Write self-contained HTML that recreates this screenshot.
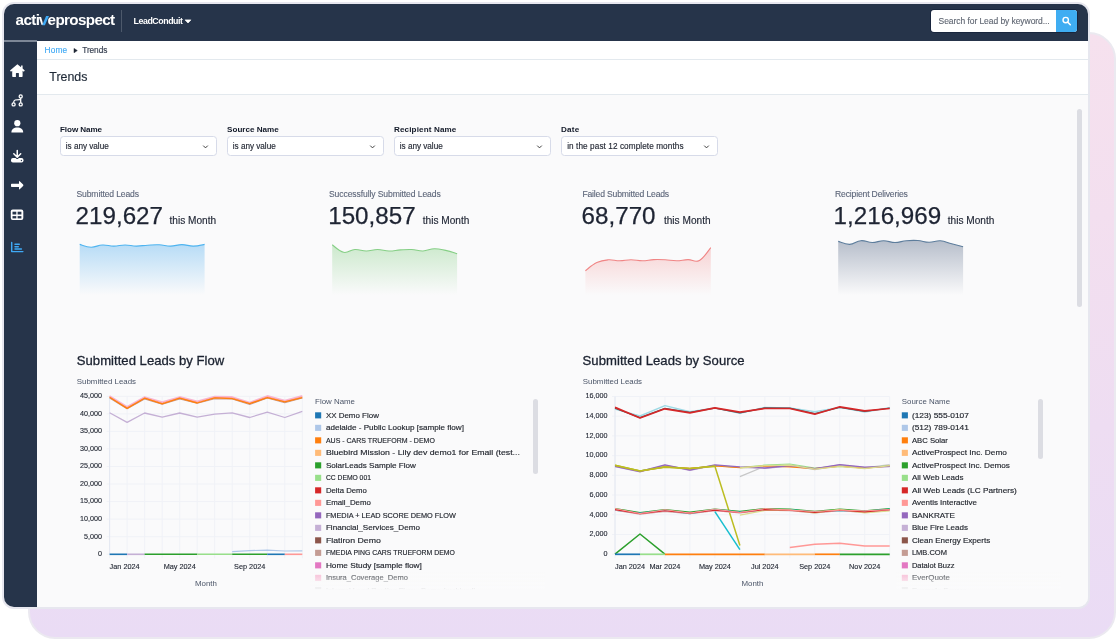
<!DOCTYPE html>
<html lang="en">
<head>
<meta charset="utf-8">
<title>Trends - LeadConduit</title>
<style>
*{box-sizing:border-box;margin:0;padding:0}
html,body{width:1116px;height:639px;overflow:hidden;background:#fff}
body{position:relative;font-family:"Liberation Sans",sans-serif;color:#1f2937}
.abs{position:absolute}
#blob{left:28px;top:32px;width:1088px;height:607px;border-radius:27px;border:2px solid #ebe9f0;
 background:linear-gradient(180deg,#f6e1ee 0%,#f3dfef 30%,#eeddf2 65%,#eadcf5 100%)}
#win{left:2px;top:2px;width:1088px;height:607px;border-radius:12px;border:2px solid #e7e7ef;background:#fafafb;overflow:hidden}
#inner{will-change:transform;position:absolute;left:-4px;top:-4px;width:1116px;height:639px}
#nav{left:0;top:0;width:1090px;height:41px;background:#26344a}
#navline{left:0;top:40px;width:37px;height:2px;background:#7d8797}
#side{left:0;top:42px;width:37px;height:570px;background:#26344a}
#crumb{left:37px;top:41px;width:1053px;height:19px;background:#fff;border-bottom:1px solid #e3e9ee}
#titlebar{left:37px;top:60px;width:1053px;height:35px;background:#fff;border-bottom:1px solid #e3e9ee}
#main{left:37px;top:95px;width:1053px;height:516px;background:#fafafb}
.t{position:absolute;white-space:pre;line-height:1}
#divider{left:121px;top:9.8px;width:1px;height:21.8px;background:#4d596b}
#caret{left:185px;top:19.5px;width:0;height:0;border-left:3.2px solid transparent;border-right:3.2px solid transparent;border-top:3.6px solid #fff}
#search{left:931px;top:10px;width:146px;height:22px;border-radius:3px;background:#fff;overflow:hidden;box-shadow:0 0 0 0.8px #16223a}
#sbtn{left:125px;top:0;width:21px;height:22px;background:#3fadf2}
.sel{position:absolute;top:136px;width:156.5px;height:20px;border:1px solid #d7dbe9;border-radius:3.5px;background:#fff}
.sel svg{position:absolute;right:6.5px;top:7px}
#crumbarrow{left:73.8px;top:48.3px;width:0;height:0;border-top:2.3px solid transparent;border-bottom:2.3px solid transparent;border-left:3.5px solid #222b3a}
#vscroll{left:1077px;top:109px;width:5.2px;height:198px;border-radius:3px;background:#dcdde3}
.lscroll{position:absolute;width:5px;border-radius:3px;background:#dcdde3}
.lg{filter:blur(0.45px)}
.fade{position:absolute;background:linear-gradient(to bottom,rgba(249,250,251,0),rgba(249,250,251,1) 75%)}
</style>
</head>
<body>
<div id="blob" class="abs"></div>
<div id="win" class="abs"><div id="inner">
 <div id="nav" class="abs"></div>
 <div id="navline" class="abs"></div>
 <div id="side" class="abs"></div>
 <div id="crumb" class="abs"></div>
 <div id="titlebar" class="abs"></div>
 <div id="main" class="abs"></div>
 <div id="divider" class="abs"></div>
 <svg class="abs" style="left:180px;top:15px" width="16" height="12" viewBox="180 15 16 12"><path d="M185.1 19.9 H190.9 L188 23 Z" fill="#fff" stroke="#fff" stroke-width="0.7" stroke-linejoin="round"/></svg>
 <div id="search" class="abs"><div id="sbtn" class="abs">
  <svg width="21.3" height="21.7" viewBox="0 0 21.3 21.7"><circle cx="9.7" cy="10.1" r="2.7" fill="none" stroke="#fff" stroke-width="1.4"/><path d="M11.8 12.2 L14.3 14.7" stroke="#fff" stroke-width="1.6" stroke-linecap="round"/></svg>
 </div></div>
 <svg class="abs" style="left:70px;top:44px" width="12" height="12" viewBox="70 44 12 12"><path d="M74 48.4 L77.3 50.6 L74 52.8 Z" fill="#1d2533" stroke="#1d2533" stroke-width="0.5" stroke-linejoin="round"/></svg>
 <div class="sel" style="left:60px"><svg width="7" height="6" viewBox="0 0 7 6"><path d="M1.5 1.9 L3.5 3.9 L5.5 1.9" fill="none" stroke="#333" stroke-width="0.95" stroke-linecap="round" stroke-linejoin="round"/></svg></div>
 <div class="sel" style="left:227px"><svg width="7" height="6" viewBox="0 0 7 6"><path d="M1.5 1.9 L3.5 3.9 L5.5 1.9" fill="none" stroke="#333" stroke-width="0.95" stroke-linecap="round" stroke-linejoin="round"/></svg></div>
 <div class="sel" style="left:394px"><svg width="7" height="6" viewBox="0 0 7 6"><path d="M1.5 1.9 L3.5 3.9 L5.5 1.9" fill="none" stroke="#333" stroke-width="0.95" stroke-linecap="round" stroke-linejoin="round"/></svg></div>
 <div class="sel" style="left:561px"><svg width="7" height="6" viewBox="0 0 7 6"><path d="M1.5 1.9 L3.5 3.9 L5.5 1.9" fill="none" stroke="#333" stroke-width="0.95" stroke-linecap="round" stroke-linejoin="round"/></svg></div>
<svg class="abs" style="left:0;top:0" width="40" height="639" viewBox="0 0 40 639">
 <!-- home -->
 <path d="M17.4 64.2 L10.0 70.4 L11.0 71.7 L12.2 70.7 V76.3 Q12.2 77 12.9 77 H15.9 V73.4 Q15.9 72.9 16.4 72.9 H18.4 Q18.9 72.9 18.9 73.4 V77 H21.9 Q22.6 77 22.6 76.3 V70.7 L23.8 71.7 L24.8 70.4 L22.6 68.6 V65.6 H21.1 V67.3 Z" fill="#fff"/>
 <!-- flow -->
 <g fill="none" stroke="#fff" stroke-width="1.3">
  <circle cx="20.7" cy="96.4" r="1.55"/><circle cx="20.7" cy="104.4" r="1.55"/><circle cx="13.6" cy="104.4" r="1.55"/>
  <path d="M20.7 98 V102.8"/><path d="M13.6 102.8 C13.6 99.4 16 99.6 20.7 99.6"/>
 </g>
 <!-- user -->
 <g fill="#fff">
  <circle cx="17.3" cy="123.2" r="3.1"/>
  <path d="M11.4 132.5 C11.4 129.2 13.9 127.5 17.3 127.5 C20.7 127.5 23.2 129.2 23.2 132.5 Z"/>
 </g>
 <!-- download -->
 <rect x="11" y="158" width="12.5" height="4.5" rx="1.9" fill="#fff"/>
 <path d="M17.25 150.4 V157 M13.8 153.8 L17.25 157.3 L20.7 153.8" fill="none" stroke="#26344a" stroke-width="3.2" stroke-linecap="round" stroke-linejoin="round"/>
 <path d="M17.25 150.4 V157 M13.8 153.8 L17.25 157.3 L20.7 153.8" fill="none" stroke="#fff" stroke-width="1.5" stroke-linecap="round" stroke-linejoin="round"/>
 <circle cx="21.4" cy="160.5" r="0.65" fill="#26344a"/>
 <!-- arrow right -->
 <path d="M11.7 183.8 H19 V181.6 Q19 180.8 19.7 181.3 L23.1 184.6 Q23.7 185.3 23.1 186 L19.7 189.2 Q19 189.7 19 188.9 V186.9 H11.7 Q11 186.9 11 186.2 V184.5 Q11 183.8 11.7 183.8 Z" fill="#fff"/>
 <!-- table -->
 <rect x="10.8" y="209.5" width="12.5" height="10.4" rx="1.9" fill="#fff"/>
 <g fill="#26344a">
  <rect x="12.5" y="211.7" width="3.8" height="2.8"/><rect x="17.6" y="211.7" width="3.8" height="2.8"/>
  <rect x="12.5" y="216.1" width="3.8" height="2.3"/><rect x="17.6" y="216.1" width="3.8" height="2.3"/>
 </g>
 <!-- chart bar (active) -->
 <g fill="none" stroke="#3fa9f5" stroke-width="1.45" stroke-linecap="round" stroke-linejoin="round">
  <path d="M11.7 242.4 V251.6 H22.9"/>
  <path d="M15 244.2 H19.3"/><path d="M15 246.7 H18.3"/><path d="M15 249.0 H21.4"/>
 </g>
</svg>

<svg class="abs" style="left:0;top:0" width="1116" height="639" viewBox="0 0 1116 639" font-family="'Liberation Sans', sans-serif">
<defs>
<linearGradient id="g1" x1="0" y1="0" x2="0" y2="1"><stop offset="0" stop-color="#8fcaf3" stop-opacity="0.62"/><stop offset="1" stop-color="#8fcaf3" stop-opacity="0"/></linearGradient>
<linearGradient id="g2" x1="0" y1="0" x2="0" y2="1"><stop offset="0" stop-color="#a6dba6" stop-opacity="0.55"/><stop offset="1" stop-color="#a6dba6" stop-opacity="0"/></linearGradient>
<linearGradient id="g3" x1="0" y1="0" x2="0" y2="1"><stop offset="0" stop-color="#f5a3a3" stop-opacity="0.45"/><stop offset="1" stop-color="#f5a3a3" stop-opacity="0"/></linearGradient>
<linearGradient id="g4" x1="0" y1="0" x2="0" y2="1"><stop offset="0" stop-color="#8d99ad" stop-opacity="0.62"/><stop offset="1" stop-color="#8d99ad" stop-opacity="0"/></linearGradient>
<clipPath id="lc1"><rect x="310" y="392" width="232" height="197.5"/></clipPath>
<clipPath id="lc2"><rect x="896" y="392" width="160" height="197.5"/></clipPath>
<linearGradient id="fd" x1="0" y1="0" x2="0" y2="1"><stop offset="0" stop-color="#fafafb" stop-opacity="0"/><stop offset="1" stop-color="#fafafb" stop-opacity="1"/></linearGradient>
</defs>
<path d="M79.7 244.4 C82.1 245.0 86.3 247.1 91.1 247.2 C95.8 247.3 97.6 245.2 102.4 245.0 C107.2 244.7 109.0 246.1 113.8 246.1 C118.5 246.1 120.3 245.0 125.1 245.0 C129.9 245.0 131.7 246.1 136.5 246.1 C141.2 246.1 143.1 245.4 147.8 245.2 C152.6 244.9 154.4 244.6 159.2 244.8 C164.0 245.0 165.8 246.1 170.5 246.1 C175.3 246.1 177.1 244.6 181.9 244.6 C186.7 244.6 188.5 246.1 193.2 246.1 C198.0 246.1 202.2 244.8 204.6 244.4 L204.6 295 L79.7 295 Z" fill="url(#g1)"/>
<path d="M79.7 244.4 C82.1 245.0 86.3 247.1 91.1 247.2 C95.8 247.3 97.6 245.2 102.4 245.0 C107.2 244.7 109.0 246.1 113.8 246.1 C118.5 246.1 120.3 245.0 125.1 245.0 C129.9 245.0 131.7 246.1 136.5 246.1 C141.2 246.1 143.1 245.4 147.8 245.2 C152.6 244.9 154.4 244.6 159.2 244.8 C164.0 245.0 165.8 246.1 170.5 246.1 C175.3 246.1 177.1 244.6 181.9 244.6 C186.7 244.6 188.5 246.1 193.2 246.1 C198.0 246.1 202.2 244.8 204.6 244.4" fill="none" stroke="#4eb4f0" stroke-width="1.1"/>
<path d="M332.2 244.8 C334.6 246.4 338.8 251.3 343.6 252.3 C348.3 253.3 350.1 249.8 354.9 249.5 C359.7 249.2 361.5 251.0 366.3 251.0 C371.0 251.0 372.8 249.5 377.6 249.5 C382.4 249.5 384.2 250.9 389.0 251.0 C393.7 251.1 395.6 250.2 400.3 249.9 C405.1 249.6 406.9 249.3 411.7 249.5 C416.5 249.7 418.3 251.2 423.0 251.0 C427.8 250.8 429.6 248.8 434.4 248.7 C439.2 248.6 441.0 249.4 445.7 250.4 C450.5 251.4 454.7 252.9 457.1 253.6 L457.1 295 L332.2 295 Z" fill="url(#g2)"/>
<path d="M332.2 244.8 C334.6 246.4 338.8 251.3 343.6 252.3 C348.3 253.3 350.1 249.8 354.9 249.5 C359.7 249.2 361.5 251.0 366.3 251.0 C371.0 251.0 372.8 249.5 377.6 249.5 C382.4 249.5 384.2 250.9 389.0 251.0 C393.7 251.1 395.6 250.2 400.3 249.9 C405.1 249.6 406.9 249.3 411.7 249.5 C416.5 249.7 418.3 251.2 423.0 251.0 C427.8 250.8 429.6 248.8 434.4 248.7 C439.2 248.6 441.0 249.4 445.7 250.4 C450.5 251.4 454.7 252.9 457.1 253.6" fill="none" stroke="#86cf86" stroke-width="1.1"/>
<path d="M585.4 270.7 C587.8 269.0 592.0 264.9 596.8 262.6 C601.6 260.3 603.4 260.2 608.2 259.8 C613.0 259.4 614.8 260.8 619.6 260.8 C624.4 260.8 626.2 259.8 631.0 259.8 C635.8 259.8 637.6 260.8 642.4 260.8 C647.2 260.8 649.0 259.8 653.8 259.6 C658.6 259.4 660.4 259.5 665.2 259.8 C670.0 260.1 671.8 260.8 676.6 260.8 C681.4 260.8 683.2 259.7 688.0 259.6 C692.8 259.5 694.6 262.9 699.4 260.4 C704.2 257.9 708.4 250.3 710.8 247.6 L710.8 295 L585.4 295 Z" fill="url(#g3)"/>
<path d="M585.4 270.7 C587.8 269.0 592.0 264.9 596.8 262.6 C601.6 260.3 603.4 260.2 608.2 259.8 C613.0 259.4 614.8 260.8 619.6 260.8 C624.4 260.8 626.2 259.8 631.0 259.8 C635.8 259.8 637.6 260.8 642.4 260.8 C647.2 260.8 649.0 259.8 653.8 259.6 C658.6 259.4 660.4 259.5 665.2 259.8 C670.0 260.1 671.8 260.8 676.6 260.8 C681.4 260.8 683.2 259.7 688.0 259.6 C692.8 259.5 694.6 262.9 699.4 260.4 C704.2 257.9 708.4 250.3 710.8 247.6" fill="none" stroke="#f08585" stroke-width="1.1"/>
<path d="M838.2 241.4 C840.6 242.0 844.8 244.5 849.6 244.4 C854.3 244.3 856.1 241.1 860.9 240.7 C865.7 240.3 867.5 242.5 872.3 242.5 C877.0 242.5 878.8 240.7 883.6 240.7 C888.4 240.7 890.2 242.5 895.0 242.5 C899.7 242.5 901.6 241.1 906.3 240.7 C911.1 240.3 912.9 240.2 917.7 240.5 C922.5 240.8 924.3 242.2 929.0 242.3 C933.8 242.4 935.6 240.5 940.4 240.8 C945.2 241.1 947.0 242.6 951.7 243.8 C956.5 245.0 960.7 246.1 963.1 246.7 L963.1 295 L838.2 295 Z" fill="url(#g4)"/>
<path d="M838.2 241.4 C840.6 242.0 844.8 244.5 849.6 244.4 C854.3 244.3 856.1 241.1 860.9 240.7 C865.7 240.3 867.5 242.5 872.3 242.5 C877.0 242.5 878.8 240.7 883.6 240.7 C888.4 240.7 890.2 242.5 895.0 242.5 C899.7 242.5 901.6 241.1 906.3 240.7 C911.1 240.3 912.9 240.2 917.7 240.5 C922.5 240.8 924.3 242.2 929.0 242.3 C933.8 242.4 935.6 240.5 940.4 240.8 C945.2 241.1 947.0 242.6 951.7 243.8 C956.5 245.0 960.7 246.1 963.1 246.7" fill="none" stroke="#5d7d9c" stroke-width="1.1"/>
<path d="M109.60 396.3 V558.2" stroke="#f0f2f7" stroke-width="1"/>
<path d="M127.12 396.3 V558.2" stroke="#f0f2f7" stroke-width="1"/>
<path d="M144.64 396.3 V558.2" stroke="#f0f2f7" stroke-width="1"/>
<path d="M162.15 396.3 V558.2" stroke="#f0f2f7" stroke-width="1"/>
<path d="M179.67 396.3 V558.2" stroke="#f0f2f7" stroke-width="1"/>
<path d="M197.19 396.3 V558.2" stroke="#f0f2f7" stroke-width="1"/>
<path d="M214.71 396.3 V558.2" stroke="#f0f2f7" stroke-width="1"/>
<path d="M232.23 396.3 V558.2" stroke="#f0f2f7" stroke-width="1"/>
<path d="M249.75 396.3 V558.2" stroke="#f0f2f7" stroke-width="1"/>
<path d="M267.26 396.3 V558.2" stroke="#f0f2f7" stroke-width="1"/>
<path d="M284.78 396.3 V558.2" stroke="#f0f2f7" stroke-width="1"/>
<path d="M302.30 396.3 V558.2" stroke="#f0f2f7" stroke-width="1"/>
<path d="M106.6 396.30 H302.3" stroke="#f0f2f7" stroke-width="1"/>
<path d="M106.6 413.84 H302.3" stroke="#f0f2f7" stroke-width="1"/>
<path d="M106.6 431.39 H302.3" stroke="#f0f2f7" stroke-width="1"/>
<path d="M106.6 448.93 H302.3" stroke="#f0f2f7" stroke-width="1"/>
<path d="M106.6 466.48 H302.3" stroke="#f0f2f7" stroke-width="1"/>
<path d="M106.6 484.02 H302.3" stroke="#f0f2f7" stroke-width="1"/>
<path d="M106.6 501.57 H302.3" stroke="#f0f2f7" stroke-width="1"/>
<path d="M106.6 519.11 H302.3" stroke="#f0f2f7" stroke-width="1"/>
<path d="M106.6 536.66 H302.3" stroke="#f0f2f7" stroke-width="1"/>
<path d="M106.6 554.20 H302.3" stroke="#f0f2f7" stroke-width="1"/>
<path d="M109.60 396.3 V554.2" stroke="#e4e8f1" stroke-width="1"/>
<text x="102.1" y="398.1" font-size="7.2" fill="#1f2430" stroke="#1f2430" stroke-width="0.12" text-anchor="end">45,000</text>
<text x="102.1" y="415.6" font-size="7.2" fill="#1f2430" stroke="#1f2430" stroke-width="0.12" text-anchor="end">40,000</text>
<text x="102.1" y="433.2" font-size="7.2" fill="#1f2430" stroke="#1f2430" stroke-width="0.12" text-anchor="end">35,000</text>
<text x="102.1" y="450.7" font-size="7.2" fill="#1f2430" stroke="#1f2430" stroke-width="0.12" text-anchor="end">30,000</text>
<text x="102.1" y="468.3" font-size="7.2" fill="#1f2430" stroke="#1f2430" stroke-width="0.12" text-anchor="end">25,000</text>
<text x="102.1" y="485.8" font-size="7.2" fill="#1f2430" stroke="#1f2430" stroke-width="0.12" text-anchor="end">20,000</text>
<text x="102.1" y="503.4" font-size="7.2" fill="#1f2430" stroke="#1f2430" stroke-width="0.12" text-anchor="end">15,000</text>
<text x="102.1" y="520.9" font-size="7.2" fill="#1f2430" stroke="#1f2430" stroke-width="0.12" text-anchor="end">10,000</text>
<text x="102.1" y="538.5" font-size="7.2" fill="#1f2430" stroke="#1f2430" stroke-width="0.12" text-anchor="end">5,000</text>
<text x="102.1" y="556.0" font-size="7.2" fill="#1f2430" stroke="#1f2430" stroke-width="0.12" text-anchor="end">0</text>
<text x="109.6" y="568.8" font-size="7.3" fill="#1f2430" stroke="#1f2430" stroke-width="0.12">Jan 2024</text>
<text x="179.7" y="568.8" font-size="7.3" fill="#1f2430" stroke="#1f2430" stroke-width="0.12" text-anchor="middle">May 2024</text>
<text x="249.7" y="568.8" font-size="7.3" fill="#1f2430" stroke="#1f2430" stroke-width="0.12" text-anchor="middle">Sep 2024</text>
<text x="76.8" y="383.9" font-size="7.9" fill="#4b5568">Submitted Leads</text>
<text x="205.9" y="586.3" font-size="7.9" fill="#4b5568" text-anchor="middle">Month</text>
<path d="M109.6 398.0 L127.1 408.7 L144.6 399.0 L162.2 404.1 L179.7 399.0 L197.2 403.3 L214.7 398.7 L232.2 399.0 L249.7 404.5 L267.3 398.0 L284.8 402.7 L302.3 398.0" fill="none" stroke="#c49c94" stroke-width="1.1" stroke-linejoin="round"/>
<path d="M109.6 395.8 L127.1 406.5 L144.6 396.8 L162.2 401.9 L179.7 396.8 L197.2 401.1 L214.7 396.5 L232.2 396.8 L249.7 402.3 L267.3 395.8 L284.8 400.5 L302.3 395.8" fill="none" stroke="#f7b6d2" stroke-width="1.4" stroke-linejoin="round"/>
<path d="M109.6 396.8 L127.1 407.5 L144.6 397.8 L162.2 402.9 L179.7 397.8 L197.2 402.1 L214.7 397.5 L232.2 397.8 L249.7 403.3 L267.3 396.8 L284.8 401.5 L302.3 396.8" fill="none" stroke="#ff9896" stroke-width="1.0" stroke-linejoin="round"/>
<path d="M109.6 397.2 L127.1 408.4 L144.6 398.2 L162.2 403.8 L179.7 398.2 L197.2 403.0 L214.7 397.9 L232.2 398.7 L249.7 403.7 L267.3 397.7 L284.8 401.9 L302.3 397.7" fill="none" stroke="#ff7f0e" stroke-width="1.3" stroke-linejoin="round"/>
<path d="M109.6 412.8 L127.1 422.4 L144.6 413.0 L162.2 417.2 L179.7 413.0 L197.2 417.2 L214.7 414.2 L232.2 412.8 L249.7 417.5 L267.3 412.1 L284.8 417.5 L302.3 411.4" fill="none" stroke="#c5b0d5" stroke-width="1.3" stroke-linejoin="round"/>
<path d="M232.2 551.7 L249.7 550.6 L267.3 550.2 L284.8 551.0 L302.3 550.9" fill="none" stroke="#aec7e8" stroke-width="1.2" stroke-linejoin="round"/>
<path d="M109.6 554.3 H127.1" stroke="#1f77b4" stroke-width="1.6"/>
<path d="M127.1 554.3 H144.6" stroke="#c5b0d5" stroke-width="1.6"/>
<path d="M144.6 554.3 H197.2" stroke="#2ca02c" stroke-width="1.6"/>
<path d="M197.2 554.3 H232.2" stroke="#98df8a" stroke-width="1.6"/>
<path d="M232.2 554.3 H267.3" stroke="#2ca02c" stroke-width="1.6"/>
<path d="M267.3 554.3 H284.8" stroke="#1f77b4" stroke-width="1.6"/>
<path d="M284.8 554.3 H302.3" stroke="#ff9896" stroke-width="1.6"/>
<path d="M615.00 396.5 V558.2" stroke="#f0f2f7" stroke-width="1"/>
<path d="M639.97 396.5 V558.2" stroke="#f0f2f7" stroke-width="1"/>
<path d="M664.95 396.5 V558.2" stroke="#f0f2f7" stroke-width="1"/>
<path d="M689.92 396.5 V558.2" stroke="#f0f2f7" stroke-width="1"/>
<path d="M714.89 396.5 V558.2" stroke="#f0f2f7" stroke-width="1"/>
<path d="M739.86 396.5 V558.2" stroke="#f0f2f7" stroke-width="1"/>
<path d="M764.84 396.5 V558.2" stroke="#f0f2f7" stroke-width="1"/>
<path d="M789.81 396.5 V558.2" stroke="#f0f2f7" stroke-width="1"/>
<path d="M814.78 396.5 V558.2" stroke="#f0f2f7" stroke-width="1"/>
<path d="M839.75 396.5 V558.2" stroke="#f0f2f7" stroke-width="1"/>
<path d="M864.73 396.5 V558.2" stroke="#f0f2f7" stroke-width="1"/>
<path d="M889.70 396.5 V558.2" stroke="#f0f2f7" stroke-width="1"/>
<path d="M612.0 396.50 H889.7" stroke="#f0f2f7" stroke-width="1"/>
<path d="M612.0 416.21 H889.7" stroke="#f0f2f7" stroke-width="1"/>
<path d="M612.0 435.93 H889.7" stroke="#f0f2f7" stroke-width="1"/>
<path d="M612.0 455.64 H889.7" stroke="#f0f2f7" stroke-width="1"/>
<path d="M612.0 475.35 H889.7" stroke="#f0f2f7" stroke-width="1"/>
<path d="M612.0 495.06 H889.7" stroke="#f0f2f7" stroke-width="1"/>
<path d="M612.0 514.78 H889.7" stroke="#f0f2f7" stroke-width="1"/>
<path d="M612.0 534.49 H889.7" stroke="#f0f2f7" stroke-width="1"/>
<path d="M612.0 554.20 H889.7" stroke="#f0f2f7" stroke-width="1"/>
<path d="M615.00 396.5 V554.2" stroke="#e4e8f1" stroke-width="1"/>
<text x="607.5" y="398.3" font-size="7.2" fill="#1f2430" stroke="#1f2430" stroke-width="0.12" text-anchor="end">16,000</text>
<text x="607.5" y="418.0" font-size="7.2" fill="#1f2430" stroke="#1f2430" stroke-width="0.12" text-anchor="end">14,000</text>
<text x="607.5" y="437.7" font-size="7.2" fill="#1f2430" stroke="#1f2430" stroke-width="0.12" text-anchor="end">12,000</text>
<text x="607.5" y="457.4" font-size="7.2" fill="#1f2430" stroke="#1f2430" stroke-width="0.12" text-anchor="end">10,000</text>
<text x="607.5" y="477.2" font-size="7.2" fill="#1f2430" stroke="#1f2430" stroke-width="0.12" text-anchor="end">8,000</text>
<text x="607.5" y="496.9" font-size="7.2" fill="#1f2430" stroke="#1f2430" stroke-width="0.12" text-anchor="end">6,000</text>
<text x="607.5" y="516.6" font-size="7.2" fill="#1f2430" stroke="#1f2430" stroke-width="0.12" text-anchor="end">4,000</text>
<text x="607.5" y="536.3" font-size="7.2" fill="#1f2430" stroke="#1f2430" stroke-width="0.12" text-anchor="end">2,000</text>
<text x="607.5" y="556.0" font-size="7.2" fill="#1f2430" stroke="#1f2430" stroke-width="0.12" text-anchor="end">0</text>
<text x="615.0" y="568.8" font-size="7.3" fill="#1f2430" stroke="#1f2430" stroke-width="0.12">Jan 2024</text>
<text x="664.9" y="568.8" font-size="7.3" fill="#1f2430" stroke="#1f2430" stroke-width="0.12" text-anchor="middle">Mar 2024</text>
<text x="714.9" y="568.8" font-size="7.3" fill="#1f2430" stroke="#1f2430" stroke-width="0.12" text-anchor="middle">May 2024</text>
<text x="764.8" y="568.8" font-size="7.3" fill="#1f2430" stroke="#1f2430" stroke-width="0.12" text-anchor="middle">Jul 2024</text>
<text x="814.8" y="568.8" font-size="7.3" fill="#1f2430" stroke="#1f2430" stroke-width="0.12" text-anchor="middle">Sep 2024</text>
<text x="864.7" y="568.8" font-size="7.3" fill="#1f2430" stroke="#1f2430" stroke-width="0.12" text-anchor="middle">Nov 2024</text>
<text x="582.8" y="383.9" font-size="7.9" fill="#4b5568">Submitted Leads</text>
<text x="752.4" y="586.3" font-size="7.9" fill="#4b5568" text-anchor="middle">Month</text>
<path d="M615.0 466.7 L640.0 471.9 L664.9 465.3 L689.9 470.4 L714.9 465.3 L739.9 467.3 L764.8 468.4 L789.8 466.1 L814.8 469.0 L839.8 465.0 L864.7 467.6 L889.7 466.7" fill="none" stroke="#c5b0d5" stroke-width="1.3" stroke-linejoin="round"/>
<path d="M739.9 476.6 L764.8 466.3 L789.8 465.2 L814.8 469.7 L839.8 465.7 L864.7 468.0 L889.7 464.6" fill="none" stroke="#c7c7c7" stroke-width="1.3" stroke-linejoin="round"/>
<path d="M615.0 465.7 L640.0 470.9 L664.9 466.3 L689.9 468.6 L714.9 465.7 L739.9 467.5 L764.8 465.2 L789.8 464.0 L814.8 468.0 L839.8 466.3 L864.7 468.0 L889.7 465.7" fill="none" stroke="#98df8a" stroke-width="1.2" stroke-linejoin="round"/>
<path d="M615.0 465.7 L640.0 471.2 L664.9 466.9 L689.9 468.3 L714.9 466.0 L739.9 467.7 L764.8 466.0 L789.8 466.9 L814.8 468.6 L839.8 466.3 L864.7 468.3 L889.7 466.0" fill="none" stroke="#ff7f0e" stroke-width="1.1" stroke-linejoin="round"/>
<path d="M615.0 466.3 L640.0 471.5 L664.9 464.9 L689.9 470.0 L714.9 464.9 L739.9 466.9 L764.8 468.0 L789.8 465.7 L814.8 468.6 L839.8 464.6 L864.7 467.2 L889.7 466.3" fill="none" stroke="#9467bd" stroke-width="1.3" stroke-linejoin="round"/>
<path d="M615.0 465.2 L640.0 470.9 L664.9 466.9 L689.9 468.6 L714.9 466.3 L739.9 545.4" fill="none" stroke="#bcbd22" stroke-width="1.5" stroke-linejoin="round"/>
<path d="M739.9 468.0 L764.8 465.7 L789.8 465.2 L814.8 469.2 L839.8 466.3 L864.7 468.6 L889.7 465.7" fill="none" stroke="#dbdb8d" stroke-width="1.3" stroke-linejoin="round"/>
<path d="M615.0 465.2 L640.0 470.9 L664.9 467.2 L689.9 468.6 L714.9 466.3" fill="none" stroke="#bcbd22" stroke-width="1.4" stroke-linejoin="round"/>
<path d="M615.0 510.1 L640.0 514.1 L664.9 511.3 L689.9 513.6 L714.9 510.7 L739.9 513.0 L764.8 510.1 L789.8 510.7 L814.8 513.0 L839.8 510.7 L864.7 512.4 L889.7 510.1" fill="none" stroke="#c49c94" stroke-width="1.2" stroke-linejoin="round"/>
<path d="M615.0 508.5 L640.0 512.5 L664.9 509.7 L689.9 512.0 L714.9 509.1 L739.9 511.4 L764.8 508.5 L789.8 509.1 L814.8 511.4 L839.8 509.1 L864.7 510.8 L889.7 508.5" fill="none" stroke="#2ca02c" stroke-width="1.2" stroke-linejoin="round"/>
<path d="M615.0 510.1 L640.0 513.1 L664.9 510.3 L689.9 513.6 L714.9 509.7 L739.9 512.0 L764.8 510.1 L789.8 509.7 L814.8 512.0 L839.8 510.7 L864.7 511.4 L889.7 509.1" fill="none" stroke="#17becf" stroke-width="1.2" stroke-linejoin="round"/>
<path d="M615.0 509.8 L640.0 513.8 L664.9 511.0 L689.9 513.3 L714.9 510.4 L739.9 512.7 L764.8 509.8 L789.8 510.4 L814.8 512.7 L839.8 510.4 L864.7 512.1 L889.7 509.8" fill="none" stroke="#f7b6d2" stroke-width="1.2" stroke-linejoin="round"/>
<path d="M714.9 511.6 L739.9 549.7" fill="none" stroke="#17becf" stroke-width="1.5" stroke-linejoin="round"/>
<path d="M739.9 515.1 L764.8 510.5 L789.8 509.9 L814.8 512.8 L839.8 509.3 L864.7 512.8 L889.7 511.0" fill="none" stroke="#dbdb8d" stroke-width="1.2" stroke-linejoin="round"/>
<path d="M615.0 509.6 L640.0 513.6 L664.9 510.8 L689.9 513.1 L714.9 510.2 L739.9 512.5 L764.8 509.6 L789.8 510.2 L814.8 512.5 L839.8 510.2 L864.7 511.9 L889.7 509.6" fill="none" stroke="#d62728" stroke-width="1.1" stroke-linejoin="round"/>
<path d="M615.0 508.5 L640.0 513.6 L664.9 509.7 L689.9 513.1 L714.9 509.1 L739.9 512.5 L764.8 508.5 L789.8 510.2 L814.8 511.4 L839.8 510.2 L864.7 510.8 L889.7 509.6" fill="none" stroke="#ff9896" stroke-width="1.0" stroke-linejoin="round"/>
<path d="M615.0 409.1 L640.0 416.0 L664.9 405.6 L689.9 411.7 L714.9 407.9 L739.9 413.4 L764.8 407.4 L789.8 407.9 L814.8 411.7 L839.8 407.4 L864.7 412.0 L889.7 407.7" fill="none" stroke="#9edae5" stroke-width="1.4" stroke-linejoin="round"/>
<path d="M615.0 408.3 L640.0 417.6 L664.9 408.4 L689.9 412.4 L714.9 408.2 L739.9 412.9 L764.8 407.9 L789.8 408.2 L814.8 413.6 L839.8 407.3 L864.7 411.5 L889.7 408.0" fill="none" stroke="#4d5a5e" stroke-width="1.2" stroke-linejoin="round"/>
<path d="M615.0 407.4 L640.0 418.0 L664.9 408.8 L689.9 412.8 L714.9 407.9 L739.9 412.2 L764.8 408.5 L789.8 408.5 L814.8 414.2 L839.8 406.8 L864.7 410.8 L889.7 408.5" fill="none" stroke="#d62728" stroke-width="1.7" stroke-linejoin="round"/>
<path d="M615.0 554.1 L640.0 534.0 L664.9 554.1" fill="none" stroke="#2ca02c" stroke-width="1.5" stroke-linejoin="round"/>
<path d="M789.8 547.5 L814.8 544.3 L839.8 543.2 L864.7 546.0 L889.7 546.0" fill="none" stroke="#ff9896" stroke-width="1.4" stroke-linejoin="round"/>
<path d="M615.0 554.3 H640.0" stroke="#1f77b4" stroke-width="1.7"/>
<path d="M640.0 554.3 H664.9" stroke="#98df8a" stroke-width="1.7"/>
<path d="M664.9 554.3 H764.8" stroke="#ff7f0e" stroke-width="1.7"/>
<path d="M764.8 554.3 H814.8" stroke="#ffbb78" stroke-width="1.7"/>
<path d="M814.8 554.3 H839.8" stroke="#ff7f0e" stroke-width="1.7"/>
<path d="M839.8 554.3 H889.7" stroke="#2ca02c" stroke-width="1.7"/>
<text x="315.1" y="404" font-size="7.9" fill="#4b5568">Flow Name</text>
<g clip-path="url(#lc1)">
<rect x="315.1" y="412.3" width="6.1" height="6.1" fill="#1f77b4"/>
<text class="lg" x="325.9" y="417.9" font-size="7.3" fill="#23272f" stroke="#23272f" stroke-width="0.15" textLength="53" lengthAdjust="spacingAndGlyphs">XX Demo Flow</text>
<rect x="315.1" y="424.8" width="6.1" height="6.1" fill="#aec7e8"/>
<text class="lg" x="325.9" y="430.4" font-size="7.3" fill="#23272f" stroke="#23272f" stroke-width="0.15" textLength="138" lengthAdjust="spacingAndGlyphs">adelaide - Public Lookup [sample flow]</text>
<rect x="315.1" y="437.3" width="6.1" height="6.1" fill="#ff7f0e"/>
<text class="lg" x="325.9" y="442.9" font-size="7.3" fill="#23272f" stroke="#23272f" stroke-width="0.15" textLength="109" lengthAdjust="spacingAndGlyphs">AUS - CARS TRUEFORM - DEMO</text>
<rect x="315.1" y="449.8" width="6.1" height="6.1" fill="#ffbb78"/>
<text class="lg" x="325.9" y="455.4" font-size="7.3" fill="#23272f" stroke="#23272f" stroke-width="0.15" textLength="194" lengthAdjust="spacingAndGlyphs">Bluebird Mission - Lily dev demo1 for Email (test...</text>
<rect x="315.1" y="462.3" width="6.1" height="6.1" fill="#2ca02c"/>
<text class="lg" x="325.9" y="467.9" font-size="7.3" fill="#23272f" stroke="#23272f" stroke-width="0.15" textLength="90" lengthAdjust="spacingAndGlyphs">SolarLeads Sample Flow</text>
<rect x="315.1" y="474.8" width="6.1" height="6.1" fill="#98df8a"/>
<text class="lg" x="325.9" y="480.4" font-size="7.3" fill="#23272f" stroke="#23272f" stroke-width="0.15" textLength="45" lengthAdjust="spacingAndGlyphs">CC DEMO 001</text>
<rect x="315.1" y="487.3" width="6.1" height="6.1" fill="#d62728"/>
<text class="lg" x="325.9" y="492.9" font-size="7.3" fill="#23272f" stroke="#23272f" stroke-width="0.15" textLength="41" lengthAdjust="spacingAndGlyphs">Delta Demo</text>
<rect x="315.1" y="499.8" width="6.1" height="6.1" fill="#ff9896"/>
<text class="lg" x="325.9" y="505.4" font-size="7.3" fill="#23272f" stroke="#23272f" stroke-width="0.15" textLength="45" lengthAdjust="spacingAndGlyphs">Email_Demo</text>
<rect x="315.1" y="512.3" width="6.1" height="6.1" fill="#9467bd"/>
<text class="lg" x="325.9" y="517.9" font-size="7.3" fill="#23272f" stroke="#23272f" stroke-width="0.15" textLength="130" lengthAdjust="spacingAndGlyphs">FMEDIA + LEAD SCORE DEMO FLOW</text>
<rect x="315.1" y="524.8" width="6.1" height="6.1" fill="#c5b0d5"/>
<text class="lg" x="325.9" y="530.4" font-size="7.3" fill="#23272f" stroke="#23272f" stroke-width="0.15" textLength="94" lengthAdjust="spacingAndGlyphs">Financial_Services_Demo</text>
<rect x="315.1" y="537.3" width="6.1" height="6.1" fill="#8c564b"/>
<text class="lg" x="325.9" y="542.9" font-size="7.3" fill="#23272f" stroke="#23272f" stroke-width="0.15" textLength="55" lengthAdjust="spacingAndGlyphs">Flatiron Demo</text>
<rect x="315.1" y="549.8" width="6.1" height="6.1" fill="#c49c94"/>
<text class="lg" x="325.9" y="555.4" font-size="7.3" fill="#23272f" stroke="#23272f" stroke-width="0.15" textLength="129" lengthAdjust="spacingAndGlyphs">FMEDIA PING CARS TRUEFORM DEMO</text>
<rect x="315.1" y="562.3" width="6.1" height="6.1" fill="#e377c2"/>
<text class="lg" x="325.9" y="567.9" font-size="7.3" fill="#23272f" stroke="#23272f" stroke-width="0.15" textLength="96" lengthAdjust="spacingAndGlyphs">Home Study [sample flow]</text>
<rect x="315.1" y="574.8" width="6.1" height="6.1" fill="#f7b6d2"/>
<text class="lg" x="325.9" y="580.4" font-size="7.3" fill="#23272f" stroke="#23272f" stroke-width="0.15" textLength="82" lengthAdjust="spacingAndGlyphs">Insura_Coverage_Demo</text>
<rect x="315.1" y="587.3" width="6.1" height="6.1" fill="#7f7f7f"/>
<text class="lg" x="325.9" y="592.9" font-size="7.3" fill="#23272f" stroke="#23272f" stroke-width="0.15" textLength="150" lengthAdjust="spacingAndGlyphs">Internal Lead Routing Flow - Demo (archived)</text>
<rect x="315.1" y="599.8" width="6.1" height="6.1" fill="#c7c7c7"/>
<text class="lg" x="325.9" y="605.4" font-size="7.3" fill="#23272f" stroke="#23272f" stroke-width="0.15" textLength="30" lengthAdjust="spacingAndGlyphs">Jumbo</text>
</g>
<text x="901.8" y="404" font-size="7.9" fill="#4b5568">Source Name</text>
<g clip-path="url(#lc2)">
<rect x="901.8" y="412.3" width="6.1" height="6.1" fill="#1f77b4"/>
<text class="lg" x="911.9" y="417.9" font-size="7.3" fill="#23272f" stroke="#23272f" stroke-width="0.15" textLength="57" lengthAdjust="spacingAndGlyphs">(123) 555-0107</text>
<rect x="901.8" y="424.8" width="6.1" height="6.1" fill="#aec7e8"/>
<text class="lg" x="911.9" y="430.4" font-size="7.3" fill="#23272f" stroke="#23272f" stroke-width="0.15" textLength="57" lengthAdjust="spacingAndGlyphs">(512) 789-0141</text>
<rect x="901.8" y="437.3" width="6.1" height="6.1" fill="#ff7f0e"/>
<text class="lg" x="911.9" y="442.9" font-size="7.3" fill="#23272f" stroke="#23272f" stroke-width="0.15" textLength="36" lengthAdjust="spacingAndGlyphs">ABC Solar</text>
<rect x="901.8" y="449.8" width="6.1" height="6.1" fill="#ffbb78"/>
<text class="lg" x="911.9" y="455.4" font-size="7.3" fill="#23272f" stroke="#23272f" stroke-width="0.15" textLength="95" lengthAdjust="spacingAndGlyphs">ActiveProspect Inc. Demo</text>
<rect x="901.8" y="462.3" width="6.1" height="6.1" fill="#2ca02c"/>
<text class="lg" x="911.9" y="467.9" font-size="7.3" fill="#23272f" stroke="#23272f" stroke-width="0.15" textLength="98" lengthAdjust="spacingAndGlyphs">ActiveProspect Inc. Demos</text>
<rect x="901.8" y="474.8" width="6.1" height="6.1" fill="#98df8a"/>
<text class="lg" x="911.9" y="480.4" font-size="7.3" fill="#23272f" stroke="#23272f" stroke-width="0.15" textLength="51.5" lengthAdjust="spacingAndGlyphs">All Web Leads</text>
<rect x="901.8" y="487.3" width="6.1" height="6.1" fill="#d62728"/>
<text class="lg" x="911.9" y="492.9" font-size="7.3" fill="#23272f" stroke="#23272f" stroke-width="0.15" textLength="105" lengthAdjust="spacingAndGlyphs">All Web Leads (LC Partners)</text>
<rect x="901.8" y="499.8" width="6.1" height="6.1" fill="#ff9896"/>
<text class="lg" x="911.9" y="505.4" font-size="7.3" fill="#23272f" stroke="#23272f" stroke-width="0.15" textLength="65" lengthAdjust="spacingAndGlyphs">Aventis Interactive</text>
<rect x="901.8" y="512.3" width="6.1" height="6.1" fill="#9467bd"/>
<text class="lg" x="911.9" y="517.9" font-size="7.3" fill="#23272f" stroke="#23272f" stroke-width="0.15" textLength="43" lengthAdjust="spacingAndGlyphs">BANKRATE</text>
<rect x="901.8" y="524.8" width="6.1" height="6.1" fill="#c5b0d5"/>
<text class="lg" x="911.9" y="530.4" font-size="7.3" fill="#23272f" stroke="#23272f" stroke-width="0.15" textLength="56" lengthAdjust="spacingAndGlyphs">Blue Fire Leads</text>
<rect x="901.8" y="537.3" width="6.1" height="6.1" fill="#8c564b"/>
<text class="lg" x="911.9" y="542.9" font-size="7.3" fill="#23272f" stroke="#23272f" stroke-width="0.15" textLength="78.4" lengthAdjust="spacingAndGlyphs">Clean Energy Experts</text>
<rect x="901.8" y="549.8" width="6.1" height="6.1" fill="#c49c94"/>
<text class="lg" x="911.9" y="555.4" font-size="7.3" fill="#23272f" stroke="#23272f" stroke-width="0.15" textLength="35" lengthAdjust="spacingAndGlyphs">LMB.COM</text>
<rect x="901.8" y="562.3" width="6.1" height="6.1" fill="#e377c2"/>
<text class="lg" x="911.9" y="567.9" font-size="7.3" fill="#23272f" stroke="#23272f" stroke-width="0.15" textLength="42.7" lengthAdjust="spacingAndGlyphs">Datalot Buzz</text>
<rect x="901.8" y="574.8" width="6.1" height="6.1" fill="#f7b6d2"/>
<text class="lg" x="911.9" y="580.4" font-size="7.3" fill="#23272f" stroke="#23272f" stroke-width="0.15" textLength="38" lengthAdjust="spacingAndGlyphs">EverQuote</text>
<rect x="901.8" y="587.3" width="6.1" height="6.1" fill="#7f7f7f"/>
<text class="lg" x="911.9" y="592.9" font-size="7.3" fill="#23272f" stroke="#23272f" stroke-width="0.15" textLength="55" lengthAdjust="spacingAndGlyphs">Example Source</text>
<rect x="901.8" y="599.8" width="6.1" height="6.1" fill="#c7c7c7"/>
<text class="lg" x="911.9" y="605.4" font-size="7.3" fill="#23272f" stroke="#23272f" stroke-width="0.15" textLength="30" lengthAdjust="spacingAndGlyphs">Fidelity</text>
</g>
<rect x="310" y="570" width="235" height="20" fill="url(#fd)"/>
<rect x="896" y="570" width="165" height="20" fill="url(#fd)"/>
</svg>
<span class="t" style="left:133.60px;top:17.00px;font-size:8.8px;font-weight:700;color:#ffffff;letter-spacing:-0.442px;">LeadConduit</span>
<span class="t" style="left:938.60px;top:17.00px;font-size:8.5px;color:#5f6672;letter-spacing:-0.066px;-webkit-text-stroke:0.12px #5f6672;">Search for Lead by keyword...</span>
<span class="t" style="left:44.60px;top:46.00px;font-size:8.3px;color:#3fa9f5;letter-spacing:0.115px;-webkit-text-stroke:0.15px #3fa9f5;">Home</span>
<span class="t" style="left:82.20px;top:46.00px;font-size:8.3px;color:#333c4d;letter-spacing:-0.069px;-webkit-text-stroke:0.15px #333c4d;">Trends</span>
<span class="t" style="left:49.30px;top:71.00px;font-size:12.4px;color:#1f2937;letter-spacing:0.015px;-webkit-text-stroke:0.15px #1f2937;">Trends</span>
<span class="t" style="left:60.00px;top:126.00px;font-size:8.1px;font-weight:700;color:#111827;letter-spacing:-0.082px;">Flow Name</span>
<span class="t" style="left:227.10px;top:126.00px;font-size:8.1px;font-weight:700;color:#111827;letter-spacing:-0.012px;">Source Name</span>
<span class="t" style="left:394.00px;top:126.00px;font-size:8.1px;font-weight:700;color:#111827;letter-spacing:0.126px;">Recipient Name</span>
<span class="t" style="left:561.00px;top:126.00px;font-size:8.1px;font-weight:700;color:#111827;letter-spacing:0.238px;">Date</span>
<span class="t" style="left:65.80px;top:143.00px;font-size:8.2px;color:#1f2430;letter-spacing:-0.029px;-webkit-text-stroke:0.15px #1f2430;">is any value</span>
<span class="t" style="left:232.80px;top:143.00px;font-size:8.2px;color:#1f2430;letter-spacing:-0.029px;-webkit-text-stroke:0.15px #1f2430;">is any value</span>
<span class="t" style="left:399.80px;top:143.00px;font-size:8.2px;color:#1f2430;letter-spacing:-0.029px;-webkit-text-stroke:0.15px #1f2430;">is any value</span>
<span class="t" style="left:567.20px;top:143.00px;font-size:8.2px;color:#1f2430;letter-spacing:0.087px;-webkit-text-stroke:0.15px #1f2430;">in the past 12 complete months</span>
<span class="t" style="left:76.50px;top:190.00px;font-size:8.6px;color:#5b6478;letter-spacing:-0.140px;-webkit-text-stroke:0.1px #5b6478;">Submitted Leads</span>
<span class="t" style="left:75.60px;top:204.00px;font-size:24.2px;color:#1e2433;-webkit-text-stroke:0.25px #1e2433;">219,627</span>
<span class="t" style="left:169.50px;top:216.00px;font-size:10.1px;color:#1e2433;letter-spacing:0.012px;-webkit-text-stroke:0.15px #1e2433;">this Month</span>
<span class="t" style="left:329.00px;top:190.00px;font-size:8.6px;color:#5b6478;letter-spacing:-0.109px;-webkit-text-stroke:0.1px #5b6478;">Successfully Submitted Leads</span>
<span class="t" style="left:328.20px;top:204.00px;font-size:24.2px;color:#1e2433;-webkit-text-stroke:0.25px #1e2433;">150,857</span>
<span class="t" style="left:422.70px;top:216.00px;font-size:10.1px;color:#1e2433;letter-spacing:0.012px;-webkit-text-stroke:0.15px #1e2433;">this Month</span>
<span class="t" style="left:582.40px;top:190.00px;font-size:8.6px;color:#5b6478;letter-spacing:-0.168px;-webkit-text-stroke:0.1px #5b6478;">Failed Submitted Leads</span>
<span class="t" style="left:581.60px;top:204.00px;font-size:24.2px;color:#1e2433;-webkit-text-stroke:0.25px #1e2433;">68,770</span>
<span class="t" style="left:663.90px;top:216.00px;font-size:10.1px;color:#1e2433;letter-spacing:0.012px;-webkit-text-stroke:0.15px #1e2433;">this Month</span>
<span class="t" style="left:835.00px;top:190.00px;font-size:8.6px;color:#5b6478;letter-spacing:-0.163px;-webkit-text-stroke:0.1px #5b6478;">Recipient Deliveries</span>
<span class="t" style="left:833.60px;top:204.00px;font-size:24.2px;color:#1e2433;-webkit-text-stroke:0.25px #1e2433;">1,216,969</span>
<span class="t" style="left:947.70px;top:216.00px;font-size:10.1px;color:#1e2433;letter-spacing:0.012px;-webkit-text-stroke:0.15px #1e2433;">this Month</span>
<span class="t" style="left:76.80px;top:354.00px;font-size:13.1px;color:#1b2230;letter-spacing:0.020px;-webkit-text-stroke:0.3px #1b2230;">Submitted Leads by Flow</span>
<span class="t" style="left:582.60px;top:354.00px;font-size:13.1px;color:#1b2230;letter-spacing:0.046px;-webkit-text-stroke:0.3px #1b2230;">Submitted Leads by Source</span>
<span class="t" style="left:15.60px;top:12.00px;font-size:15.2px;font-weight:700;color:#ffffff;letter-spacing:-0.568px;">acti</span>
<span class="t" style="left:38.70px;top:12.00px;font-size:15.2px;font-weight:700;color:#ffffff;clip-path:inset(2.5px 4.3px 0 0);">v</span>
<span class="t" style="left:47.60px;top:12.00px;font-size:15.2px;font-weight:700;color:#ffffff;letter-spacing:-0.633px;">eprospect</span>
 <svg class="abs" style="left:36px;top:12px" width="16" height="16" viewBox="36 12 16 16"><path d="M42.2 25.3 L44.9 25.3 L49.0 16.0 L46.1 16.0 Z" fill="#3fa9f5"/></svg>
 <div id="vscroll" class="abs"></div>
 <div class="lscroll" style="left:532.8px;top:398.5px;height:75.5px"></div>
 <div class="lscroll" style="left:1038.1px;top:398.5px;height:60.5px"></div>
</div></div>
</body>
</html>
